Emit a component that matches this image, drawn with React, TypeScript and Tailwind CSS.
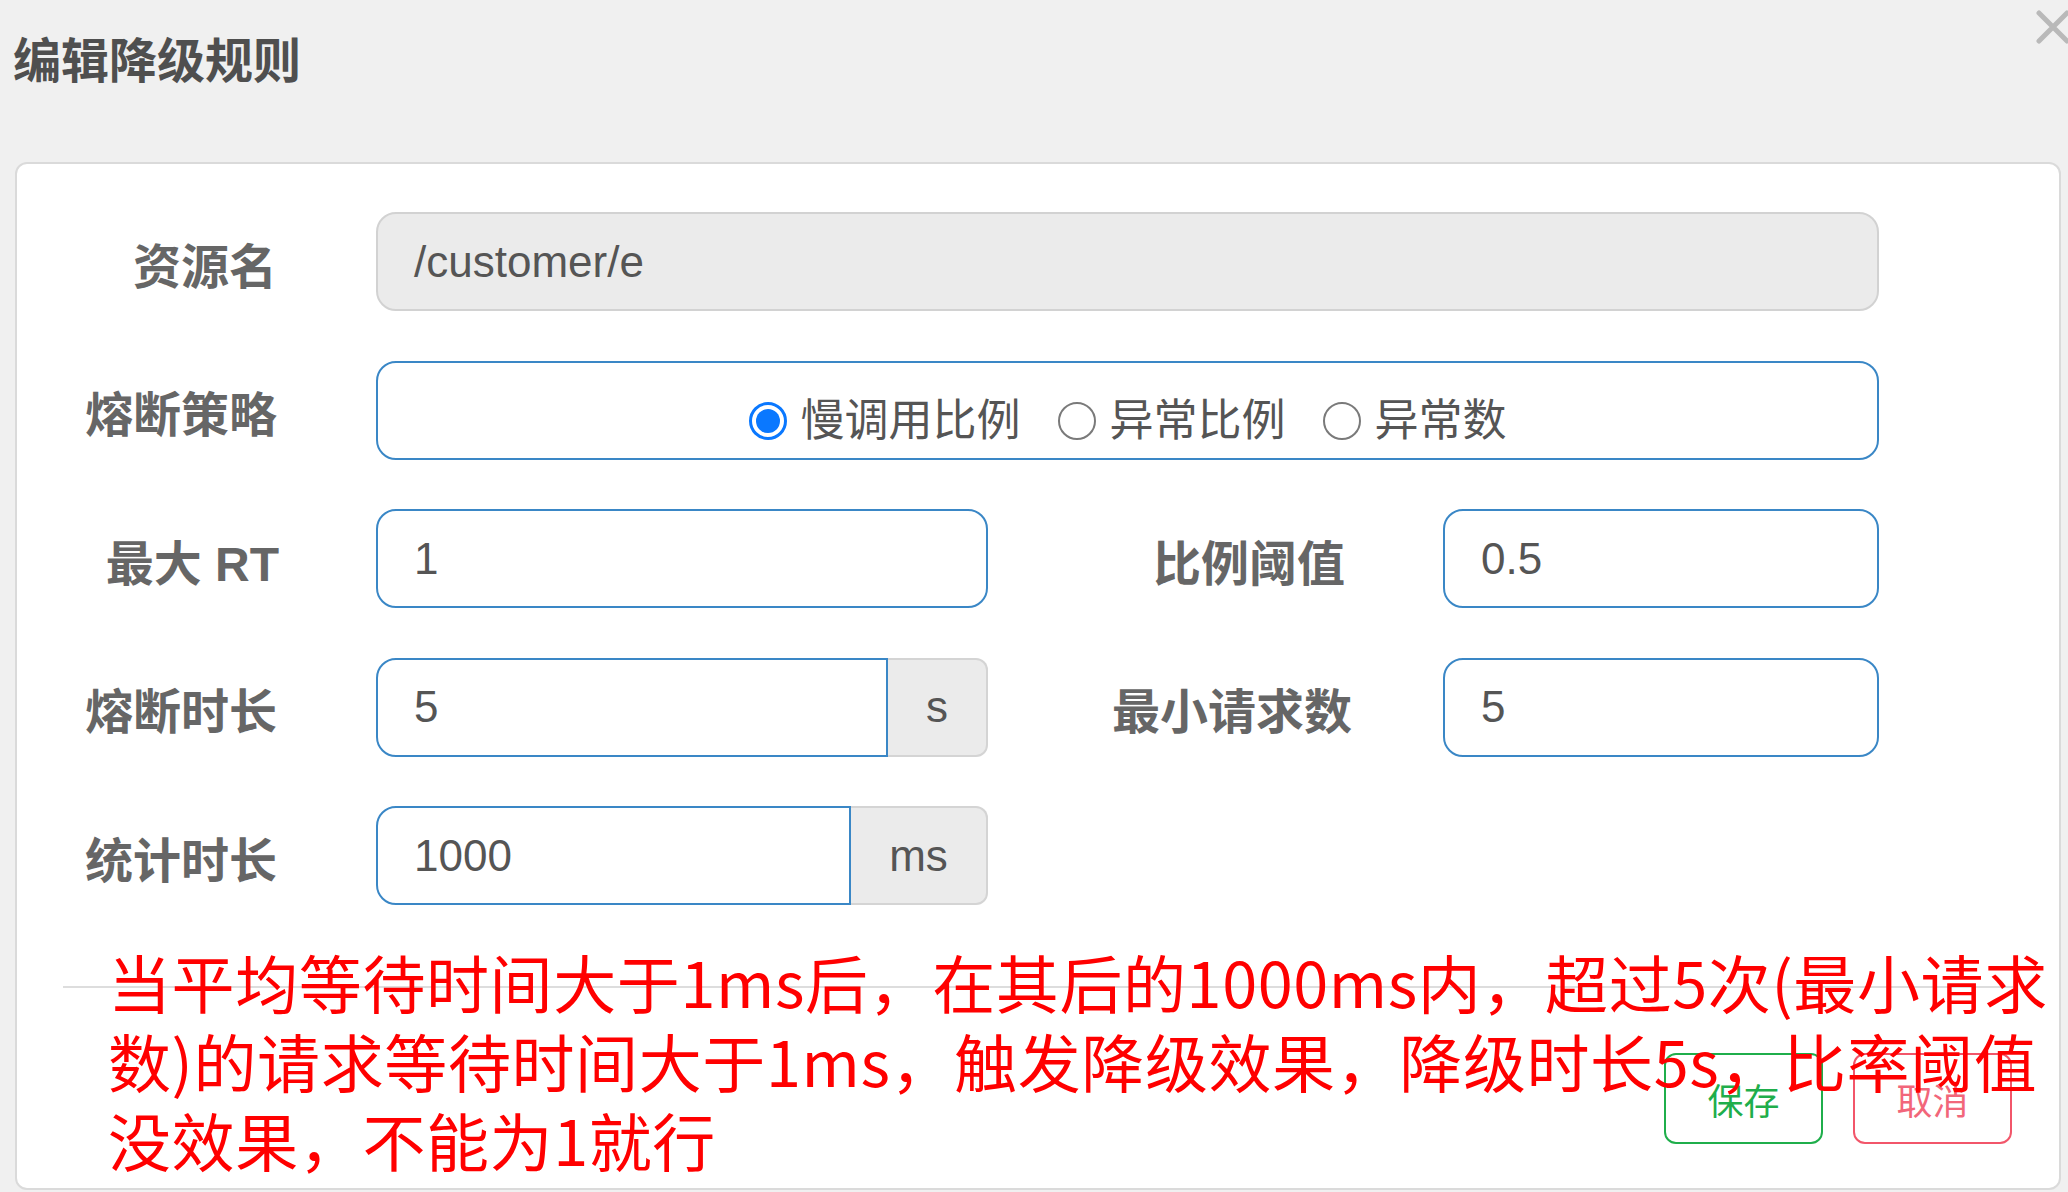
import React from 'react';

const labelFont = { fontFamily: '"Liberation Sans", "Noto Sans CJK SC", sans-serif' };

const Label = ({ text, width }: { text: string; width: string }) => (
  <div
    className={`${width} shrink-0 text-right font-bold text-[48px] leading-[58px] text-[#666] mt-[12px] whitespace-nowrap`}
    style={labelFont}
  >
    {text}
  </div>
);

const TextBox = ({ value, width }: { value: string; width: string }) => (
  <div
    className={`${width} h-[99px] shrink-0 flex items-center border-2 border-[#3a87c6] rounded-[20px] bg-white pl-[36px] text-[44px] text-[#555]`}
  >
    {value}
  </div>
);

const AddonBox = ({ value, unit, unitWidth }: { value: string; unit: string; unitWidth: string }) => (
  <div className="w-[612px] h-[99px] shrink-0 flex text-[44px] text-[#555]">
    <div className="flex-1 flex items-center border-2 border-[#3a87c6] rounded-l-[20px] bg-white pl-[36px]">
      {value}
    </div>
    <div
      className={`${unitWidth} flex items-center justify-center bg-[#ebebeb] border-2 border-l-0 border-[#d4d4d4] rounded-r-[12px]`}
    >
      {unit}
    </div>
  </div>
);

const Radio = ({ label, checked }: { label: string; checked?: boolean }) => (
  <div className="flex items-center">
    {checked ? (
      <span className="w-[38px] h-[38px] rounded-full border-[3px] border-[#0a78ff] flex items-center justify-center">
        <span className="w-[24px] h-[24px] rounded-full bg-[#0a78ff]" />
      </span>
    ) : (
      <span className="w-[38px] h-[38px] rounded-full border-2 border-[#7a7a7a] bg-white" />
    )}
    <span className="ml-[14px] text-[44px] leading-[52px] text-[#555]">{label}</span>
  </div>
);

export default function App() {
  return (
    <div
      className="relative w-[2068px] h-[1192px] overflow-hidden bg-[#f0f0f0]"
      style={{ fontFamily: '"Liberation Sans", "Noto Sans CJK SC", sans-serif' }}
    >
      {/* header */}
      <div className="h-[162px] pl-[13px] pt-[33px]">
        <h1 className="font-bold text-[48px] leading-[58px] text-[#4f4f4f]">编辑降级规则</h1>
      </div>
      <button className="absolute top-[8px] right-[-4px] w-[38px] h-[38px]">
        <svg viewBox="0 0 38 38" className="w-full h-full">
          <path d="M5 5 L33 33 M33 5 L5 33" stroke="#b9b9b9" strokeWidth="5" strokeLinecap="round" />
        </svg>
      </button>

      {/* body card */}
      <div className="relative ml-[15px] w-[2046px] h-[1028px] bg-white border-2 border-[#dadada] rounded-[12px] pt-[48px]">
        <div className="flex flex-col gap-[49.5px]">
          <div className="flex items-center">
            <Label text="资源名" width="w-[260px]" />
            <div className="ml-[99px] w-[1503px] h-[99px] flex items-center bg-[#ebebeb] border-2 border-[#d2d2d2] rounded-[20px] pl-[36px] text-[44px] text-[#555]">
              /customer/e
            </div>
          </div>

          <div className="flex items-center">
            <Label text="熔断策略" width="w-[260px]" />
            <div className="ml-[99px] w-[1503px] h-[99px] flex items-center justify-center gap-[37px] pt-[22px] bg-white border-2 border-[#3a87c6] rounded-[20px]">
              <Radio label="慢调用比例" checked />
              <Radio label="异常比例" />
              <Radio label="异常数" />
            </div>
          </div>

          <div className="flex items-center">
            <Label text="最大 RT" width="w-[262px]" />
            <div className="ml-[97px]">
              <TextBox value="1" width="w-[612px]" />
            </div>
            <Label text="比例阈值" width="w-[357px]" />
            <div className="ml-[98px]">
              <TextBox value="0.5" width="w-[436px]" />
            </div>
          </div>

          <div className="flex items-center">
            <Label text="熔断时长" width="w-[260px]" />
            <div className="ml-[99px]">
              <AddonBox value="5" unit="s" unitWidth="w-[100px]" />
            </div>
            <Label text="最小请求数" width="w-[364px]" />
            <div className="ml-[91px]">
              <TextBox value="5" width="w-[436px]" />
            </div>
          </div>

          <div className="flex items-center">
            <Label text="统计时长" width="w-[260px]" />
            <div className="ml-[99px]">
              <AddonBox value="1000" unit="ms" unitWidth="w-[137px]" />
            </div>
          </div>
        </div>

        {/* footer */}
        <div className="mx-[46px] mt-[81px] h-[2px] bg-[#dddddd]" />
        <div className="flex justify-end gap-[30px] mx-[47px] mt-[65px]">
          <button
            className="w-[159px] h-[91px] border-2 border-[#1fae4b] rounded-[12px] text-[36px] text-[#1fae4b] bg-white"
            style={{ fontFamily: '"Noto Sans CJK SC", sans-serif' }}
          >
            保存
          </button>
          <button
            className="w-[159px] h-[91px] border-2 border-[#f2566a] rounded-[12px] text-[36px] text-[#f2667a] bg-white"
            style={{ fontFamily: '"Noto Sans CJK SC", sans-serif' }}
          >
            取消
          </button>
        </div>

        {/* red annotation drawn over the footer */}
        <div
          className="absolute left-[91px] top-[777px] text-[63px] leading-[79px] tracking-[0.6px] text-[#ff0000] whitespace-nowrap"
          style={{ fontFamily: '"Noto Sans CJK SC", sans-serif' }}
        >
          <div>当平均等待时间大于1ms后，在其后的1000ms内，超过5次(最小请求</div>
          <div>数)的请求等待时间大于1ms，触发降级效果，降级时长5s，比率阈值</div>
          <div>没效果，不能为1就行</div>
        </div>
      </div>
    </div>
  );
}
